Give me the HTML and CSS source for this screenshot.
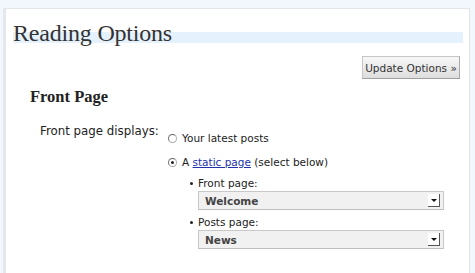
FILE: index.html
```html
<!DOCTYPE html>
<html lang="en">
<head>
<meta charset="UTF-8">
<title>Reading Options</title>
<link rel="stylesheet" href="styles.css">
</head>
<body>
<div id="wrap">
  <div id="panel">
    <h2 class="title">Reading Options</h2>
    <div class="submit-row">
      <button class="btn-update">Update Options &raquo;</button>
    </div>
    <h3 class="section">Front Page</h3>
    <div class="option-row">
      <div class="option-label">Front page displays:</div>
      <div class="option-field">
        <label class="radio-line"><span class="radio"></span>Your latest posts</label>
        <label class="radio-line"><span class="radio checked"></span>A&nbsp;<a href="#">static page</a>&nbsp;(select below)</label>
        <ul class="page-list">
          <li>
            <div class="sub-label">Front page:</div>
            <div class="select-box"><span>Welcome</span><span class="arrow"></span></div>
          </li>
          <li>
            <div class="sub-label">Posts page:</div>
            <div class="select-box"><span>News</span><span class="arrow"></span></div>
          </li>
        </ul>
      </div>
    </div>
  </div>
</div>
</body>
</html>
```
FILE: styles.css
```css
*{
    margin: 0;
    padding: 0;
    box-sizing: border-box;
}
body{
    background-color: #f1f7fc;
    font-family: "DejaVu Sans", Verdana, sans-serif;
    overflow: hidden;
}
#wrap{
    padding: 8px 5px 0 3px;
    height: 273px;
}
#panel{
    background-color: #fff;
    border-left: 3px solid #e4e8ec;
    border-right: 1px solid #dfe4e8;
    border-top: 1px solid #e0e6ea;
    height: 100%;
    padding: 9px 6px 0 7px;
}
.title{
    font-family: "Liberation Serif", serif;
    font-weight: normal;
    font-size: 24px;
    letter-spacing: -0.2px;
    color: #333;
    line-height: 28px;
    height: 28px;
    padding-top: 1px;
    background: linear-gradient(to bottom, transparent 14px, #e5f2fe 14px, #e5f2fe 25px, transparent 25px);
}
.submit-row{
    display: flex;
    justify-content: flex-end;
    margin-top: 10px;
    padding-right: 3px;
}
.btn-update{
    font-family: "DejaVu Sans", sans-serif;
    font-size: 10.5px;
    color: #333;
    height: 23px;
    width: 98px;
    border: 1px solid #c6c6c6;
    border-right-color: #a9a9a9;
    border-bottom-color: #a0a0a0;
    background: linear-gradient(to bottom, #f7f7f7, #dedede);
}
.section{
    font-family: "Liberation Serif", serif;
    font-size: 16.5px;
    color: #222;
    margin: 8px 0 0 17px;
}
.option-row{
    display: flex;
    margin-top: 17px;
}
.option-label{
    width: 155px;
    padding-left: 27px;
    font-size: 11.8px;
    color: #222;
    white-space: nowrap;
}
.option-field{
    padding-top: 7px;
    font-size: 10.5px;
    color: #222;
}
.radio-line{
    display: flex;
    align-items: center;
    height: 14px;
    margin-bottom: 10px;
}
.radio-line a{
    color: #2233aa;
}
.radio{
    width: 9px;
    height: 9px;
    border-radius: 50%;
    border: 1px solid #aaa;
    border-top-color: #666;
    border-left-color: #777;
    margin-right: 5px;
    position: relative;
}
.radio.checked::after{
    content: "";
    position: absolute;
    width: 3px;
    height: 3px;
    border-radius: 50%;
    background: #222;
    left: 2px;
    top: 2px;
}
.page-list{
    list-style: none;
    margin-left: 22px;
    margin-top: -2px;
}
.page-list li{
    margin-bottom: 6px;
}
.sub-label{
    position: relative;
    padding-left: 8px;
    font-size: 10.5px;
    color: #222;
    line-height: 13px;
}
.sub-label::before{
    content: "";
    position: absolute;
    left: 0;
    top: 5px;
    width: 3px;
    height: 3px;
    border-radius: 50%;
    background: #222;
}
.select-box{
    margin-left: 8px;
    margin-top: 1px;
    width: 246px;
    height: 19px;
    border: 1px solid #c8c8c8;
    border-bottom-color: #bdbdbd;
    background: #f1f1f1;
    display: flex;
    align-items: center;
    justify-content: space-between;
    padding: 0 3px 0 6px;
    font-size: 10.5px;
    font-weight: bold;
    color: #444;
}
.arrow{
    width: 12px;
    height: 13px;
    border-right: 1px solid #555;
    border-bottom: 1px solid #555;
    background: #fff;
    position: relative;
}
.arrow::after{
    content: "";
    position: absolute;
    left: 3px;
    top: 5px;
    border-left: 3px solid transparent;
    border-right: 3px solid transparent;
    border-top: 3px solid #111;
}
```
